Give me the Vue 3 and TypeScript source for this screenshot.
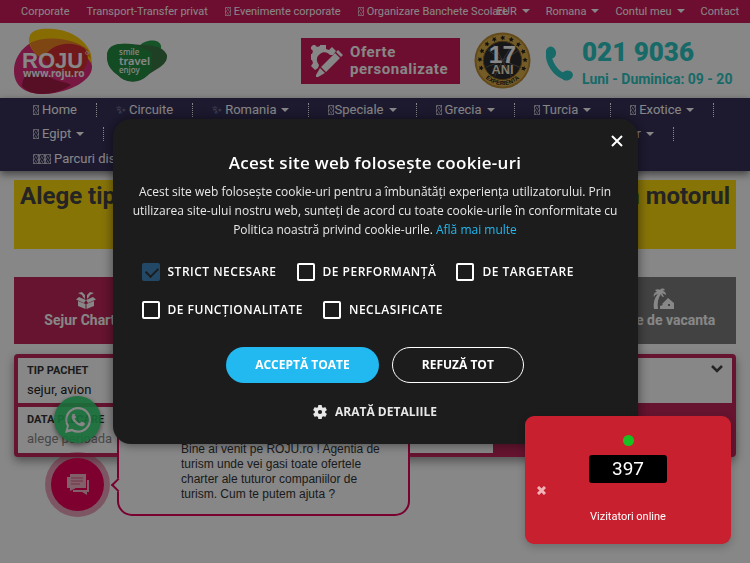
<script setup lang="ts">
import { ref } from 'vue'

interface MenuItem {
  label: string
  caret?: boolean
  boxes?: number
  sparkle?: boolean
  tight?: boolean
}

const topLeft: MenuItem[] = [
  { label: 'Corporate' },
  { label: 'Transport-Transfer privat' },
  { label: 'Evenimente corporate', boxes: 1 },
  { label: 'Organizare Banchete Scolare', boxes: 1 },
]
const topRight: MenuItem[] = [
  { label: 'EUR', caret: true },
  { label: 'Romana', caret: true },
  { label: 'Contul meu', caret: true },
  { label: 'Contact' },
]
const menuRows: MenuItem[][] = [
  [
    { label: 'Home', boxes: 1 },
    { label: 'Circuite', sparkle: true },
    { label: 'Romania', sparkle: true, caret: true },
    { label: 'Speciale', boxes: 1, tight: true, caret: true },
    { label: 'Grecia', boxes: 1, caret: true },
    { label: 'Turcia', boxes: 1, caret: true },
    { label: 'Exotice', boxes: 1, caret: true },
  ],
  [
    { label: 'Egipt', boxes: 1, caret: true },
    { label: 'Charter', caret: true },
  ],
  [{ label: 'Parcuri distractii', boxes: 3 }],
]
const stars: number[] = Array.from({ length: 11 }, (_, i) => 160 + i * 22)

const categories = ref([
  { label: 'Strict necesare', checked: true, locked: true },
  { label: 'De performanță', checked: false, locked: false },
  { label: 'De targetare', checked: false, locked: false },
  { label: 'De funcționalitate', checked: false, locked: false },
  { label: 'Neclasificate', checked: false, locked: false },
])
const visitors = ref(397)
</script>

<template>
  <div class="page">
    <div class="topbar">
      <nav class="top-left">
        <a v-for="item in topLeft" :key="item.label" href="#"><span v-if="item.boxes" class="boxes"><i></i></span>{{ item.label }}</a>
      </nav>
      <nav class="top-right">
        <a v-for="item in topRight" :key="item.label" href="#">{{ item.label }}<i v-if="item.caret" class="caret"></i></a>
      </nav>
    </div>

    <header class="header">
      <a class="logo" href="#" aria-label="ROJU">
        <svg width="78" height="66" viewBox="0 0 78 66">
          <path d="M0 43C0 25 16 9 38 10C61 11 78 21 78 39C78 55 49 66 29 66C10 66 0 57 0 43Z" fill="#e32d7c" />
          <path d="M8 58C9 44 20 39 32 47C42 54 51 53 57 57C48 63 38 66 28 66C19 66 12 63 8 58Z" fill="#a51d49" />
          <path d="M15 12C15 1 27 0 40 1C58 3 72 12 77 26L78 37C70 20 55 20 45 20C35 22 33 29 30 31C23 28 15 21 15 12Z" fill="#ffcc08" />
          <path d="M16 15C32 7 61 10 74 22L77 31C66 16 50 16 42 22C34 26 33 30 30 31C23 28 17 22 16 15Z" fill="#ee8423" />
          <path d="M29 31C35 17 55 11 70 20C77 26 74 42 62 48C49 48 37 42 29 31Z" fill="#d62f32" />
          <text x="8" y="40" class="logo-name">ROJU</text>
          <text x="9" y="49" class="logo-url">www.roju.ro</text>
          <circle cx="73" cy="25" r="1.5" fill="none" stroke="#fff" stroke-width=".6" />
        </svg>
      </a>
      <svg class="slogan" width="60" height="43" viewBox="0 0 60 43">
        <path d="M32 7C36-1 53-2 54 6C55 10 50 13 45 13Z" fill="#2b9d4a" />
        <path d="M0 16C0 5 12 3 24 4C37 6 55 3 60 15C61 26 47 29 40 36C31 45 17 42 12 36C5 31 0 26 0 16Z" fill="#3d7a48" />
        <path d="M0 16C0 5 10 3 20 4C35 5 41 11 45 13C43 20 46 25 43 32C34 45 17 42 12 36C5 31 0 26 0 16Z" fill="#258f43" />
        <text x="12" y="15" class="slogan-small">smile</text>
        <text x="12" y="25" class="slogan-big">travel</text>
        <text x="12" y="33" class="slogan-small">enjoy</text>
      </svg>
      <a class="offer" href="#">
        <svg width="32" height="32" viewBox="0 0 32 32" fill="#fff">
          <path d="M9 0h6v4l3 1 3-3 4 4-3 4-3 0c-2-3-7-4-10-1-4 3-4 7-1 11l-1 3-3 2-4-4 2-3-1-3-4-1v-5h4l1-3-3-3 4-4 3 3 3-1Z" />
          <path d="M10 22 24 8l5 5-14 14Zm15-15 2-2 5 5-2 2ZM9 23l5 5-7 4H5v-2Z" />
        </svg>
        <span>Oferte<br />personalizate</span>
      </a>
      <svg class="badge" width="57" height="57" viewBox="0 0 58 58">
        <defs><path id="ring" d="M4 29a25 25 0 0 0 50 0" /></defs>
        <circle cx="29" cy="29" r="28.500" fill="#bc8c32" />
        <circle cx="29" cy="29" r="26.500" fill="#dcae4b" />
        <circle cx="29" cy="29" r="19.500" fill="#2d2d30" stroke="#8c6220" />
        <path d="M29 29 14 18M29 29 20 13M29 29 39 13M29 29l16-10M29 29 12 36M29 29l18 7M29 29l-8 16M29 29l9 16" stroke="#625f58" />
        <path v-for="angle in stars" :key="angle" d="m52 26.500.8 1.700 1.900.2-1.400 1.300.4 1.900-1.700-1-1.700 1 .4-1.900-1.400-1.300 1.900-.2Z" fill="#222" :transform="`rotate(${angle} 29 29)`" />
        <text x="29" y="32" text-anchor="middle" class="badge-number">17</text>
        <text x="29" y="43" text-anchor="middle" class="badge-word">ANI</text>
        <text class="badge-ring"><textPath href="#ring" startOffset="50%" text-anchor="middle">EXPERIENTA</textPath></text>
      </svg>
      <div class="phone">
        <svg width="28" height="35" viewBox="0 0 28 35">
          <path d="M4 7C3 16 10 28 21 31" fill="none" stroke="#2cc8c4" stroke-width="6" stroke-linecap="round" />
          <ellipse cx="6" cy="6.500" rx="5" ry="6" fill="#2cc8c4" transform="rotate(-15 6 6.500)" />
          <ellipse cx="22" cy="29.500" rx="6" ry="4.800" fill="#2cc8c4" transform="rotate(-15 22 29.500)" />
        </svg>
        <p><strong>021 9036</strong><span>Luni - Duminica: 09 - 20</span></p>
      </div>
    </header>

    <nav class="menu">
      <div v-for="(row, r) in menuRows" :key="r" class="menu-row" :class="{ split: r === 1 }">
        <a v-for="item in row" :key="item.label" href="#"><span v-if="item.boxes" class="boxes" :class="{ tight: item.tight }"><i v-for="n in item.boxes" :key="n"></i></span><span v-if="item.sparkle" class="sparkle">✨&#xFE0E;</span>{{ item.label }}<i v-if="item.caret" class="caret"></i></a>
      </div>
    </nav>

    <main class="content">
      <h1 class="banner"><span>Alege tipul de</span><span>din motorul</span></h1>

      <div class="tabs">
        <button type="button" class="tab active">
          <svg width="20" height="17" viewBox="0 0 20 17" fill="#fff">
            <path d="m2 9 7.500 3v5L2 14ZM18 9l-7.500 3v5l7.500-3ZM0 7.500 3 5l7 3-2 3ZM20 7.500 17 5l-7 3 2 3ZM2 1l4-1 3 3v4L7 5 6 3ZM18 1l-4-1-3 3v4l2-2 1-2Z" />
          </svg>
          Sejur Charter
        </button>
        <button v-for="n in 3" :key="n" type="button" class="tab" aria-label="Oferte"></button>
        <button type="button" class="tab">
          <svg width="21" height="21" viewBox="0 0 21 21" fill="#fff">
            <path d="M1 21C0 14 2 9 5 6L2 7 1 9C0 6 2 4 4 4L2 2c2-1 4-1 5 0 1-2 4-2 5 0L9 3c3 0 4 2 4 4l-4-2 2 4c-2 0-3-2-3-3-3 4-4 9-3 15Z" />
            <path d="m9 16 6-6 6 5v6H10v-4Zm6 0v2h2v-2ZM7 18l3-1v4H7Z" fill-rule="evenodd" />
          </svg>
          Case de vacanta
        </button>
      </div>

      <form class="search" @submit.prevent>
        <div class="field">
          <label for="package">TIP PACHET</label>
          <select id="package"><option>sejur, avion</option></select>
          <svg class="chevron" width="12" height="8" viewBox="0 0 12 8"><path d="m1 1 5 5 5-5" fill="none" stroke="#444" stroke-width="2.500" /></svg>
        </div>
        <div class="field date">
          <label for="departure">DATA PLECARE</label>
          <input id="departure" type="text" placeholder="alege perioada" />
        </div>
      </form>
    </main>

    <div class="bubble">Bine ai venit pe ROJU.ro ! Agentia de turism unde vei gasi toate ofertele charter ale tuturor companiilor de turism. Cum te putem ajuta ?</div>
    <button type="button" class="chat" aria-label="Chat">
      <svg width="22" height="21" viewBox="0 0 22 21">
        <path d="M3 0h16v14H9l-6 3v-3H0V3h3Z" fill="#f3b6c9" />
        <path d="M20 6h2v12h-2v3l-5-3H6v-2h14Z" fill="#f3b6c9" />
        <path d="M4 4h12M4 7h12M4 10h9" stroke="#d85d88" />
      </svg>
    </button>
    <a class="whatsapp" href="#" aria-label="WhatsApp">
      <svg width="26" height="26" viewBox="0 0 24 24" fill="#fff">
        <path d="M.06 24l1.680-6.160A11.870 11.870 0 0 1 .160 11.890C.160 5.340 5.500 0 12.050 0a11.890 11.890 0 0 1 0 23.780h-.010a11.900 11.900 0 0 1-5.680-1.450L.060 24zm6.600-3.810c1.670 1 3.270 1.590 5.390 1.590 5.450 0 9.880-4.430 9.890-9.880A9.890 9.890 0 0 0 12.060 2a9.890 9.890 0 0 0-8.370 15.150l-1 3.640 3.970-.600z" />
        <path d="M17.500 14.400c-.300-.150-1.760-.870-2.030-.970-.270-.100-.470-.150-.670.150-.200.300-.770.970-.940 1.160-.170.200-.350.220-.640.080-.300-.150-1.260-.460-2.390-1.470a8.960 8.960 0 0 1-1.660-2.060c-.170-.300 0-.460.130-.610l.450-.520c.150-.170.200-.300.300-.500.100-.200.050-.370-.020-.520-.080-.150-.670-1.610-.920-2.210-.240-.580-.490-.500-.670-.510h-.570c-.200 0-.520.070-.790.370-.270.300-1.040 1.020-1.040 2.480s1.070 2.870 1.210 3.070c.150.200 2.100 3.200 5.080 4.490 3.160 1.360 3.160.910 3.730.850.570-.050 1.760-.720 2.010-1.410.250-.700.250-1.290.170-1.410-.070-.120-.270-.200-.570-.350z" />
      </svg>
    </a>

    <div class="overlay">
      <section class="modal" role="dialog" aria-labelledby="cookie-title">
        <button type="button" class="close" aria-label="Închide">
          <svg width="12" height="12" viewBox="0 0 12 12"><path d="m1 1 10 10M11 1 1 11" stroke="#fff" stroke-width="2" /></svg>
        </button>
        <h2 id="cookie-title">Acest site web folosește cookie-uri</h2>
        <p class="intro">Acest site web folosește cookie-uri pentru a îmbunătăți experiența utilizatorului. Prin utilizarea site-ului nostru web, sunteți de acord cu toate cookie-urile în conformitate cu Politica noastră privind cookie-urile. <a href="#">Află mai multe</a></p>
        <div class="categories">
          <label v-for="item in categories" :key="item.label">
            <input v-model="item.checked" type="checkbox" :disabled="item.locked" />{{ item.label }}
          </label>
        </div>
        <div class="actions">
          <button type="button" class="accept">ACCEPTĂ TOATE</button>
          <button type="button" class="refuse">REFUZĂ TOT</button>
        </div>
        <button type="button" class="details">
          <svg width="14" height="14" viewBox="2 2 20 20" fill="#e8e8e8"><path d="M19.430 12.980c.040-.320.070-.640.070-.980s-.030-.660-.070-.980l2.110-1.650a.5.5 0 0 0 .120-.640l-2-3.460a.5.5 0 0 0-.610-.220l-2.490 1a7.300 7.300 0 0 0-1.690-.980l-.380-2.650A.49.490 0 0 0 14 2h-4a.49.490 0 0 0-.490.420l-.380 2.650c-.610.250-1.170.590-1.690.980l-2.490-1a.5.5 0 0 0-.610.220l-2 3.460a.49.490 0 0 0 .120.640l2.110 1.650a7.900 7.900 0 0 0 0 1.960l-2.110 1.650a.5.5 0 0 0-.120.640l2 3.460c.120.220.390.300.610.220l2.490-1c.520.400 1.080.730 1.690.980l.380 2.650c.030.240.240.420.490.420h4c.250 0 .460-.180.490-.420l.380-2.650a7.700 7.700 0 0 0 1.690-.980l2.490 1c.230.090.490 0 .610-.220l2-3.460a.5.5 0 0 0-.120-.640zM12 15a3 3 0 1 1 0-6 3 3 0 0 1 0 6z" /></svg>
          ARATĂ DETALIILE
        </button>
      </section>
    </div>

    <aside class="counter">
      <span class="dot"></span>
      <output>{{ visitors }}</output>
      <p>Vizitatori online</p>
      <button type="button" class="dismiss" aria-label="Închide">
        <svg width="9" height="9" viewBox="0 0 9 9"><path d="m1 1 7 7M8 1 1 8" stroke="#f0b4b8" stroke-width="3" /></svg>
      </button>
    </aside>
  </div>
</template>

<style>
body {
  background: #fff;
  overflow: hidden;
}
</style>

<style scoped>
* {
  box-sizing: border-box;
}
.page {
  min-height: 100vh;
  font: 14px/20px Roboto, 'Liberation Sans', sans-serif;
  color: #333;
}
a {
  color: inherit;
  text-decoration: none;
}
button {
  font: inherit;
  border: 0;
  cursor: pointer;
}
h1,
h2,
p {
  margin: 0;
}
svg {
  display: block;
  flex: none;
}
.caret {
  display: inline-block;
  margin-left: 5px;
  border: 4px solid transparent;
  border-top-color: currentColor;
  border-bottom: 0;
  vertical-align: 2px;
}
.boxes {
  display: inline-flex;
  margin-right: 3px;
  vertical-align: -1px;
}
.boxes.tight {
  margin-right: 0;
}
.boxes i {
  width: 6px;
  height: 10px;
  border: 1px solid #fff8;
  background: repeating-linear-gradient(60deg, #fff6 0 1px, transparent 1px 2px);
}
.topbar .boxes i {
  height: 9px;
}
.sparkle {
  margin-right: 3px;
  color: #b9c0d4;
  font: 12px 'DejaVu Sans', sans-serif;
  font-variant-emoji: text;
  line-height: 1;
}
.topbar {
  display: flex;
  padding: 0 11px 0 21px;
  background: #cf195a;
  color: #fff;
  font-size: 11px;
  line-height: 23px;
  white-space: nowrap;
}
.top-left,
.top-right {
  display: flex;
  gap: 17px;
}
.top-left {
  flex: 1;
  min-width: 0;
}
.top-right {
  flex: none;
  gap: 16px;
}
.header {
  display: flex;
  align-items: center;
  height: 75px;
  padding: 0 14px;
}
.slogan {
  margin: 2px auto 0 15px;
}
.logo-name {
  font: bold 22px 'Liberation Sans', sans-serif;
  fill: #fff;
}
.logo-url {
  font: bold 10px 'Noto Sans', sans-serif;
  fill: #fff;
}
.slogan-small {
  font: 500 8px 'Noto Sans', sans-serif;
  fill: #fff;
}
.slogan-big {
  font: 600 11px 'Noto Sans', sans-serif;
  fill: #fff;
}
.offer {
  display: flex;
  align-items: center;
  gap: 7px;
  height: 46px;
  padding: 0 12px 0 10px;
  background: #cf195a;
  color: #fff;
  font-size: 15px;
  font-weight: bold;
  line-height: 17px;
  letter-spacing: 0.5px;
}
.badge {
  margin: 0 14px;
}
.badge-number {
  font: bold 25px 'Liberation Sans Narrow', 'Liberation Sans', sans-serif;
  fill: #fff;
}
.badge-word {
  font: bold 13px 'Liberation Sans Narrow', 'Liberation Sans', sans-serif;
  fill: #f4e8ca;
}
.badge-ring {
  font: bold 6px 'Liberation Sans', sans-serif;
  fill: #222;
}
.phone {
  display: flex;
  align-items: center;
  gap: 9px;
  margin-top: 5px;
  color: #2cc8c4;
  font-weight: bold;
  white-space: nowrap;
}
.phone p {
  display: grid;
  min-width: 154px;
}
.phone strong {
  font-size: 26px;
  line-height: 32px;
}
.phone span {
  line-height: 22px;
}
.menu {
  padding: 0 14px;
  background: #37315b;
  color: #fff;
  font-size: 13px;
  line-height: 24px;
  box-shadow: 0 3px 8px #0008;
}
.menu-row {
  display: flex;
  align-items: center;
  height: 24px;
  white-space: nowrap;
}
.menu-row:last-child {
  height: 25px;
}
.menu-row a {
  position: relative;
  padding: 0 19px;
  border-right: 1px solid transparent;
}
.menu-row a::after {
  content: '';
  position: absolute;
  top: 5px;
  right: -1px;
  height: 14px;
  border-right: 1px dotted #fff;
}
.menu-row.split {
  justify-content: space-between;
  padding-right: 62px;
}
.content {
  padding: 9px 14px 0;
}
.banner {
  display: flex;
  justify-content: space-between;
  height: 69px;
  padding: 0 6px;
  background: #ffdb0f;
  color: #444;
  font-size: 24px;
  line-height: 32px;
}
.tabs {
  display: grid;
  grid-template-columns: repeat(5, 1fr);
  height: 67px;
  margin: 28px 0 10px;
}
.tab {
  display: flex;
  flex-direction: column;
  align-items: center;
  justify-content: flex-end;
  gap: 1px;
  padding: 0 0 14px;
  background: #7e7e7e;
  color: #fff;
  font-weight: bold;
  line-height: 20px;
}
.tab.active {
  background: #c02659;
}
.search {
  display: grid;
  gap: 4px;
  padding: 4px;
  border-radius: 4px;
  background: #c02659;
  box-shadow: 0 4px 10px #0006;
}
.field {
  position: relative;
  display: grid;
  align-content: start;
  height: 45px;
  padding: 3px 9px;
  background: #fff;
  font-size: 13px;
}
.field.date {
  height: 46px;
  width: calc(66.666% - 1px);
}
.field label {
  font-size: 11px;
  font-weight: bold;
  line-height: 19px;
}
.field select,
.field input {
  appearance: none;
  width: 100%;
  height: 20px;
  padding: 0;
  border: 0;
  background: none;
  color: #222;
  font: inherit;
}
.field input::placeholder {
  color: #888;
  opacity: 1;
}
.chevron {
  position: absolute;
  top: 7px;
  right: 9px;
}
.bubble {
  position: fixed;
  left: 117px;
  bottom: 47px;
  width: 293px;
  padding: 24px 26px 12px 62px;
  border: 2px solid #e6005a;
  border-radius: 15px;
  background: #fff;
  font: 12px/15px 'Liberation Sans', sans-serif;
}
.bubble::before {
  content: '';
  position: absolute;
  left: -6px;
  bottom: 24px;
  width: 8px;
  height: 8px;
  border: solid #e6005a;
  border-width: 0 0 2px 2px;
  background: #fff;
  transform: rotate(45deg);
}
.chat {
  position: fixed;
  left: 51px;
  bottom: 52px;
  display: grid;
  place-content: center;
  width: 53px;
  height: 53px;
  border-radius: 50%;
  background: #ee005a;
  box-shadow: 0 0 0 6px #cf195a66;
}
.whatsapp {
  position: fixed;
  left: 54px;
  bottom: 120px;
  display: grid;
  place-content: center;
  width: 47px;
  height: 47px;
  border-radius: 50%;
  background: #2fd36e;
  box-shadow: 0 2px 5px #0008;
  opacity: 0.9;
}
.overlay {
  position: fixed;
  inset: 0;
  display: grid;
  place-items: center;
  background: rgba(0, 0, 0, 0.47);
}
.modal {
  position: relative;
  width: 70%;
  padding: 32px 20px 22px;
  border-radius: 18px;
  background: #1c1c1c;
  box-shadow: 0 0 12px #0008;
  color: #fff;
  font-family: 'Open Sans', 'Noto Sans', sans-serif;
  font-size: 12px;
  text-align: center;
}
.close {
  position: absolute;
  top: 12px;
  right: 11px;
  padding: 4px;
  background: none;
}
.modal h2 {
  font-size: 17px;
  font-weight: 600;
  line-height: 24px;
  letter-spacing: 0.3px;
}
.intro {
  margin-top: 7px;
  color: #e8e8e8;
  line-height: 19px;
}
.intro a {
  color: #22b8f0;
}
.categories {
  display: flex;
  flex-wrap: wrap;
  gap: 18px 20px;
  margin: 23px 0 27px;
  padding-left: 9px;
}
.categories label {
  display: flex;
  align-items: center;
  gap: 8px;
  font-weight: 600;
  line-height: 20px;
  letter-spacing: 0.5px;
  text-transform: uppercase;
}
.categories input {
  appearance: none;
  position: relative;
  width: 18px;
  height: 18px;
  margin: 0;
  border: 2px solid #fff;
  border-radius: 2px;
}
.categories input:checked {
  border-color: #234866;
  background: #234866;
}
.categories input:checked::after {
  content: '';
  position: absolute;
  top: 2px;
  left: 2px;
  width: 10px;
  height: 6px;
  border: solid #1c1c1c;
  border-width: 0 0 2px 2px;
  transform: rotate(-45deg);
}
.actions {
  display: flex;
  justify-content: center;
  gap: 13px;
  font-weight: bold;
}
.actions button {
  height: 36px;
  padding: 0 29px;
  border-radius: 18px;
  color: #fff;
}
.accept {
  background: #22b8f0;
}
.actions .refuse {
  border: 1px solid #fff;
  background: none;
}
.details {
  display: flex;
  align-items: center;
  gap: 8px;
  margin: 19px auto 0;
  padding: 0;
  background: none;
  color: #e8e8e8;
  font-weight: bold;
}
.counter {
  position: fixed;
  right: 19px;
  bottom: 19px;
  display: flex;
  flex-direction: column;
  align-items: center;
  width: 206px;
  padding: 19px 0 17px;
  border-radius: 9px;
  background: #c8202f;
  box-shadow: 0 3px 8px #0003;
  color: #fff;
  font-size: 11px;
}
.dot {
  width: 11px;
  height: 11px;
  border-radius: 50%;
  background: #18c022;
}
.counter output {
  width: 78px;
  margin: 9px 0 24px;
  border-radius: 3px;
  background: #000;
  font-size: 19px;
  line-height: 28px;
  text-align: center;
}
.dismiss {
  position: absolute;
  left: 12px;
  top: 70px;
  padding: 0;
  background: none;
}
</style>
